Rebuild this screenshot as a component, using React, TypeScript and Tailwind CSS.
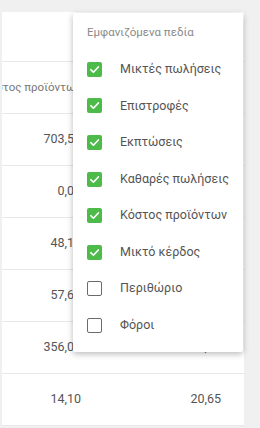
const rows = [
  ["703,52", ""],
  ["0,00", ""],
  ["48,10", ""],
  ["57,60", ""],
  ["356,04", "508,63"],
  ["14,10", "20,65"],
];

const fields = [
  { label: "Μικτές πωλήσεις", on: true },
  { label: "Επιστροφές", on: true },
  { label: "Εκπτώσεις", on: true },
  { label: "Καθαρές πωλήσεις", on: true },
  { label: "Κόστος προϊόντων", on: true },
  { label: "Μικτό κέρδος", on: true },
  { label: "Περιθώριο", on: false },
  { label: "Φόροι", on: false },
];

function Check({ on }: { on: boolean }) {
  if (!on) {
    return <span className="w-[15px] h-[15px] rounded-[2px] border-[1.5px] border-[#6b6b6b] bg-white shrink-0" />;
  }
  return (
    <span className="w-[15px] h-[15px] rounded-[2px] bg-[#4cbb4a] flex items-center justify-center shrink-0">
      <svg width="11" height="11" viewBox="0 0 10 10" fill="none">
        <path d="M1.6 5.2 L4 7.5 L8.5 2.7" stroke="white" strokeWidth="1.5" strokeLinecap="round" strokeLinejoin="round" />
      </svg>
    </span>
  );
}

export default function App() {
  return (
    <div className="relative w-[260px] h-[428px] bg-[#f0f0f0] pt-[12px] pl-[2px] overflow-hidden" style={{ fontFamily: "Roboto, 'Noto Sans', sans-serif" }}>
      <div className="w-[242px] h-[414px] bg-white overflow-hidden">
        <div className="h-[50px] border-b border-[#e8e8e8]" />
        <div className="h-[52px] border-b border-[#e8e8e8] flex items-center">
          <div className="w-[79px] flex justify-end overflow-hidden whitespace-nowrap text-[11.5px] text-[#777]">
            Κόστος προϊόντων
          </div>
        </div>
        {rows.map((r, i) => (
          <div key={i} className="h-[52px] border-b border-[#e8e8e8] flex items-center text-[12.5px] text-[#555]">
            <div className="w-[79px] flex justify-end overflow-hidden whitespace-nowrap">{r[0]}</div>
            <div className="w-[140px] flex justify-end whitespace-nowrap">{r[1]}</div>
          </div>
        ))}
      </div>

      <div className="absolute left-[73px] top-[13px] w-[170px] h-[339px] bg-white rounded-[2px] shadow-[0_2px_6px_rgba(0,0,0,0.28)] pt-[11px]">
        <div className="pl-[14px] h-[16px] leading-[16px] text-[11.5px] text-[#8a8a8a] whitespace-nowrap">Εμφανιζόμενα πεδία</div>
        <div className="mt-[11px]">
          {fields.map((f) => (
            <div key={f.label} className="h-[36.6px] flex items-center pl-[14px] gap-[18px]">
              <Check on={f.on} />
              <span className="text-[12.5px] text-[#555] whitespace-nowrap">{f.label}</span>
            </div>
          ))}
        </div>
      </div>
    </div>
  );
}
